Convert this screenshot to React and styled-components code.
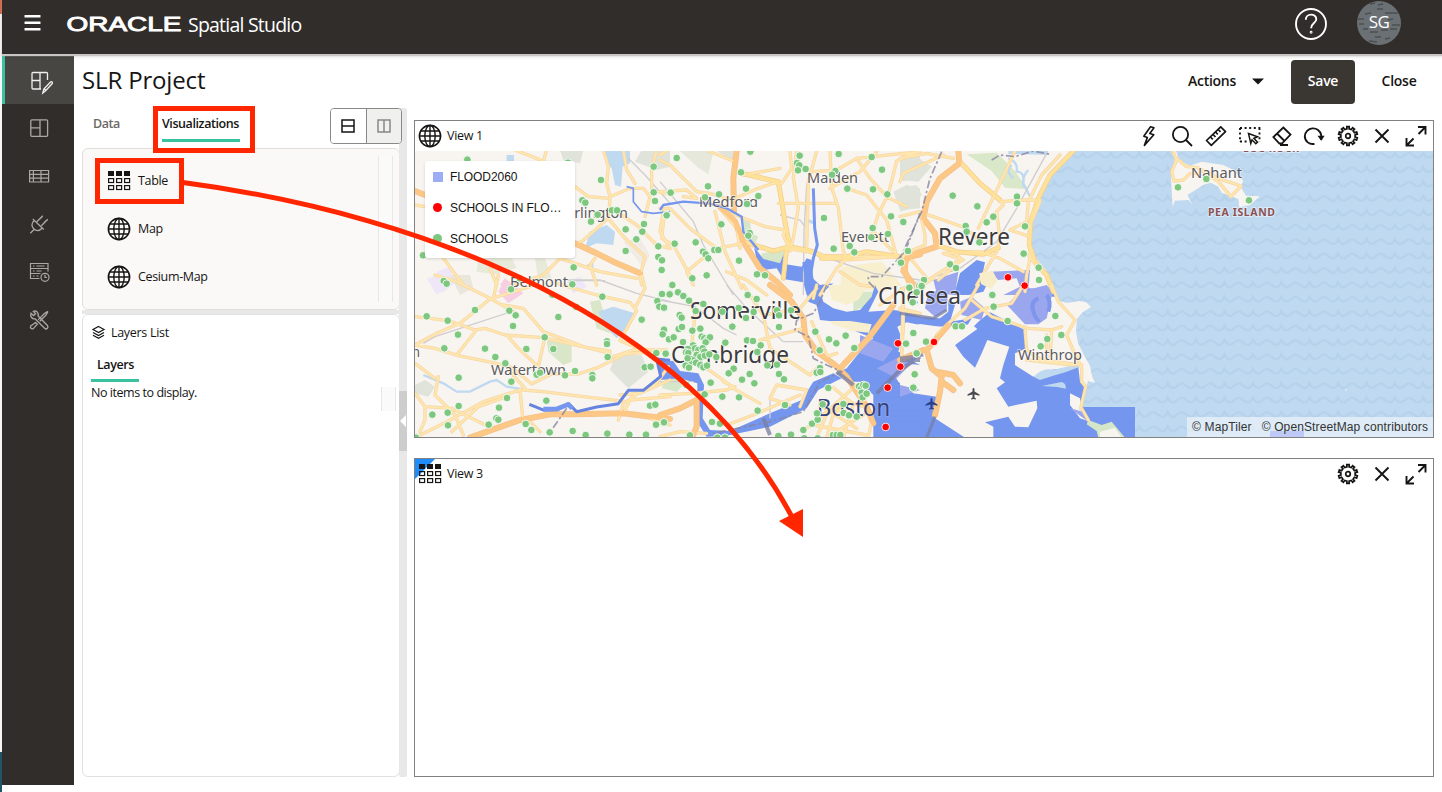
import React from 'react';
import styled, { createGlobalStyle } from 'styled-components';

const Global = createGlobalStyle`
  * { box-sizing: border-box; }
  body { margin: 0; background: #fff; overflow: hidden; }
  #root { font-family: "Open Sans", "Noto Sans", sans-serif; font-stretch: 88%; color: #161513; font-size: 13px; }
`;

/* ---------- shell ---------- */
const Page = styled.div`
  position: relative; width: 1442px; height: 792px; display: flex; overflow: hidden;
`;
const Edge = styled.div`
  width: 2px; flex: none; display: flex; flex-direction: column; background: #f6f6f6;
  &::before { content: ''; height: 14px; background: #d9694f; }
  &::after { content: ''; height: 40px; margin-top: auto; background: #1f5566; }
`;
const Shell = styled.div`flex: 1; display: flex; flex-direction: column;`;
const Header = styled.header`
  height: 54px; background: #312d2a; display: flex; align-items: flex-start; color: #fff;
  box-shadow: 0 2px 1px #c6c5c4, 0 3px 4px rgba(0,0,0,.12); z-index: 1; padding: 0 41px 0 22px;
`;
const MenuIcon = styled.svg`margin-top: 13px;`;
const HelpIcon = styled.svg`margin: 7px 0 0 auto;`;
const Brand = styled.div`display: flex; margin: 12px 0 0 25px; height: 26px;`;
const Product = styled.span`
  font-size: 19.5px; line-height: 25px; margin-left: 5px; letter-spacing: -.78px; white-space: nowrap;
`;
const Avatar = styled.div`
  position: relative; width: 44px; height: 44px; margin: 1px 0 0 29px; border-radius: 50%; overflow: hidden;
  background: #6b7074; font-size: 17px; line-height: 42px; text-align: center; letter-spacing: -.6px;
  svg { position: absolute; inset: 0; }
  span { position: relative; }
`;
const Body = styled.div`flex: 1; display: flex; padding-top: 2px;`;
const Sidebar = styled.nav`width: 72px; height: 729px; background: #312d2a; flex: none;`;
const NavItem = styled.div`
  height: 48px; display: flex; align-items: center; padding: ${p => (p.$active ? '5px 0 0 22px' : '0 0 0 26px')};
  background: ${p => (p.$active ? '#474642' : 'none')};
  border-left: ${p => (p.$active ? '3px solid #3ac2a0' : '0')};
  color: ${p => (p.$active ? '#f1f0ef' : '#aaa8a5')};
`;
const Content = styled.main`flex: 1; display: flex; flex-direction: column; padding: 0 8px 0 8px;`;
const TitleRow = styled.div`display: flex; height: 52px; align-items: flex-start; padding-top: 4px;`;
const Title = styled.h1`
  margin: 0; font-size: 24px; line-height: 39px; font-weight: 400; letter-spacing: -.15px; flex: 1;
`;
const Button = styled.button`
  height: 44px; width: ${p => p.$w}px; border: 0; border-radius: 4px; padding: 0 0 4px; font: inherit; font-size: 14px; font-weight: 600;
  font-stretch: inherit; letter-spacing: -.25px;
  background: ${p => (p.$dark ? '#3a3631' : 'transparent')}; color: ${p => (p.$dark ? '#fff' : '#161513')};
  display: flex; align-items: center; justify-content: center; gap: 16px; margin-left: ${p => p.$ml || 0}px;
  svg { margin-top: 3px; }
`;
const Work = styled.div`display: flex; height: 669px;`;

/* ---------- left panel ---------- */
const Panel = styled.section`width: 317px; display: flex; flex-direction: column;`;
const Tabs = styled.div`display: flex; height: 40px; padding-left: 11px;`;
const Tab = styled.div`
  height: ${p => p.$h || 34}px; line-height: ${p => p.$lh || 32}px; font-size: 12.5px; font-weight: 600; white-space: nowrap; letter-spacing: -.42px;
  color: ${p => (p.$on ? '#161513' : '#6b6966')}; margin-right: ${p => p.$mr || 0}px; width: ${p => p.$w}px;
  border-bottom: 3px solid ${p => (p.$on ? '#3ac2a0' : 'transparent')}; padding-left: ${p => p.$pl || 0}px;
`;
const Toggle = styled.div`
  margin-left: auto; margin-right: -3px; width: 72px; height: 36px; border: 1px solid #8a8887; border-radius: 4px; display: flex; overflow: hidden;
  position: relative;
`;
const ToggleHalf = styled.div`
  flex: 1; display: grid; place-items: center; color: ${p => (p.$off ? '#8a8887' : '#161513')};
  background: ${p => (p.$off ? '#f0f0ef' : '#fff')}; border-left: ${p => (p.$off ? '1px solid #8a8887' : '0')};
`;
const VizBox = styled.div`
  height: 162px; border: 1px solid #e0dfde; border-radius: 6px; background: #faf9f8; display: flex;
  padding: 7px 6px 7px 12px; margin-right: -1px;
`;
const VizList = styled.div`flex: 1; padding-left: 12px;`;
const VizItem = styled.div`
  height: 48px; display: flex; align-items: center; gap: 7px; font-size: 12.5px; letter-spacing: -.35px;
  svg { margin-top: 2px; }
`;
const Gutter = styled.div`width: 15px; border: solid #e8e7e6; border-width: 0 1px; background: #fafafa;`;
const Divider = styled.div`height: 4px; background: #e8e8e8;`;
const LayersBox = styled.div`
  flex: 1; border: 1px solid #e0e0e0; border-radius: 6px; padding: 8px 3px 0 8px; background: #fff; margin-right: -1px;
`;
const LayersHead = styled.div`display: flex; align-items: center; gap: 5px; height: 18px; font-size: 12.5px; letter-spacing: -.3px;`;
const Empty = styled.div`
  display: flex; justify-content: space-between; font-size: 12.5px; line-height: 21px; letter-spacing: -.45px;
  i { width: 15px; height: 24px; margin-top: 5px; border: solid #e8e7e6; border-width: 0 1px; background: #fafafa; }
`;
const Splitter = styled.div`
  width: 8px; background: #e8e8e8; display: flex; align-items: center; border-radius: 2px;
  div { width: 8px; height: 60px; background: #cdcdcd; display: grid; place-items: center; margin-bottom: 43px; }
`;

/* ---------- views ---------- */
const Views = styled.section`flex: 1; margin-left: 7px; padding-top: 12px; display: flex; flex-direction: column; gap: 20px;`;
const View = styled.div`
  position: relative; height: ${p => p.$h || 318}px; border: 1px solid #818181; display: flex; flex-direction: column; background: #fff;
`;
const ViewBar = styled.div`
  position: relative; height: 30px; display: flex; align-items: center; padding: 0 6px 0 3px; font-size: 12.5px; letter-spacing: -.3px; flex: none;
  > span { margin-left: 5px; flex: 1; padding-bottom: 1px; }
`;
const Tools = styled.div`display: flex; gap: 12px; svg { display: block; }`;
const Tighten = styled.div`margin-left: ${p => -p.$by}px;`;
const Corner = styled.div`
  position: absolute; left: 0; top: 0; width: 20px; height: 20px; background: #1e8cfa; clip-path: polygon(0 0, 100% 0, 0 100%);
`;
const MapPane = styled.div`position: relative; flex: 1; overflow: hidden; > svg { display: block; }`;
const Legend = styled.div`
  position: absolute; left: 10px; top: 10px; width: 150px; height: 97px; background: #fff; border-radius: 3px; box-shadow: 0 1px 3px rgba(0,0,0,.15);
  font: 12px "Liberation Sans", Arial, sans-serif; padding: 0 8px;
`;
const LegendRow = styled.div`
  display: flex; align-items: center; height: 31px; gap: 7px; white-space: nowrap; letter-spacing: -.08px;
`;
const Swatch = styled.i`
  width: ${p => (p.$dot ? 9 : 10)}px; height: ${p => (p.$dot ? 9 : 10)}px; border-radius: ${p => (p.$dot ? '50%' : 0)};
  background: ${p => p.$c}; margin-right: ${p => (p.$dot ? 1 : 0)}px;
`;
const Attribution = styled.div`
  position: absolute; right: 0; bottom: 0; height: 20px; padding: 0 5px; display: flex; gap: 10px; background: rgba(255,255,255,.5);
  font: 12px/20px "Liberation Sans", Arial, sans-serif; letter-spacing: .12px; color: #333; white-space: nowrap;
`;

/* ---------- annotations ---------- */
const Callout = styled.div`
  position: absolute; left: ${p => p.$x}px; top: ${p => p.$y}px; width: ${p => p.$w}px; height: ${p => p.$h}px; border: 5px solid #ff2600; z-index: 3;
`;
const ArrowLayer = styled.svg`position: absolute; left: 0; top: 0; z-index: 3; pointer-events: none;`;

/* ---------- icons ---------- */
const Ic = ({ s = 22, vb, w = 1.5, children }) => (
  <svg width={s} height={s} viewBox={vb || `0 0 ${s} ${s}`} fill="none" stroke="currentColor" strokeWidth={w}>{children}</svg>
);
const Globe = () => (
  <Ic s={24} w={1.4}><circle cx="12" cy="12" r="10.6" strokeWidth="1.6" /><ellipse cx="12" cy="12" rx="5.200" ry="10.6" /><path d="M12 1.4v21.2M1.4 12h21.2M3 7h18M3 17h18" /></Ic>
);
const TableIcon = () => (
  <svg width="24" height="22" viewBox="0 0 24 22" fill="none" stroke="#161513" strokeWidth="1.200">
    {[1, 9, 17].map(x => <React.Fragment key={x}>
      <rect x={x} y="1" width="6" height="5" fill="#161513" stroke="none" />
      <rect x={x + .6} y="8.600" width="5" height="3.900" /><rect x={x + .6} y="15.600" width="5" height="3.900" />
    </React.Fragment>)}
  </svg>
);
const NavIcons = [
  <Ic s={26} w={1.3} key="a"><path d="M20.500 10V3.500a1 1 0 0 0-1-1H6a1 1 0 0 0-1 1v14.500a1 1 0 0 0 1 1h8M13 2.500v16.500M5 10.500h8M15.800 23l1-4 6.500-6.800c1.200-1.200 2.900.3 1.800 1.600l-6.500 7-2.800 2.200zM17.200 18.800l1.800 2" /></Ic>,
  <Ic s={22} w={1.3} key="b"><rect x="2.800" y="2.800" width="16.800" height="16.500" rx="1" /><path d="M12 2.800v16.500M2.800 10.800h9.200" /></Ic>,
  <Ic s={22} w={1.2} key="c"><path d="M1.600 5.500h19v11.500h-19zM1.600 9.300h19M1.600 13.200h19M5.400 5.500V17M13 5.500V17" /></Ic>,
  <Ic s={22} w={1.3} key="d"><path d="M2.300 20.300l4.200-4.300M6.300 7.200c-3 3-3 6.300-.6 8.600 2.600 2.500 5.800 2.200 8.700-.8M4.800 6l11 10.500M8.800 8.800l6-6M13.300 12.800l6.500-6.500M11.500 6.300l2.600-2.600M16 9.800l2.600-2.600" /></Ic>,
  <Ic s={24} w={1.2} key="e"><path d="M2.500 3.500h17.500v5H2.500zM2.500 8.500v5h10M20 8.500v3M2.500 13.500v5h9M5 6h1.500M8.500 6h8M5 11h1.500M8.500 11h5M5 16h1.500M8.500 16h2" /><circle cx="17" cy="17.300" r="4" /><path d="M17 14.800v2.700h2" /></Ic>,
  <Ic s={22} w={1.3} key="f"><path d="M19.800 2.300l-3.400 2.300-6.300 6.300M20 2.500l-2 3.500-6.300 6.300M7.500 13.500l1.800 1.800-4 4.300c-1.800 1-3.600-.9-2.600-2.600zM3 4.200l2.600 2.400 2-1.800L5.300 2.300c3-1.100 5.700 1.100 4.700 4.500l9.400 9.700c1.700 2-.9 4.600-2.800 2.800L7 9.800C4.300 10.500 1.800 7.500 3 4.200z" /></Ic>,
];
const Gear = () => {
  const pts = [];
  const step = Math.PI / 5;
  for (let i = 0; i < 10; i++) {
    [[-.24, 7.200], [-.2, 9.500], [.2, 9.500], [.24, 7.200]].forEach(([o, r]) => {
      const a = (i + o) * step;
      pts.push(`${(11 + r * Math.sin(a)).toFixed(2)},${(11 - r * Math.cos(a)).toFixed(2)}`);
    });
  }
  return <Ic w={1.700}><polygon points={pts.join(' ')} /><circle cx="11" cy="11" r="2.300" strokeWidth="1.700" /></Ic>;
};
const CloseIcon = () => <Ic w={1.9}><path d="M4.500 4.500l13 13M17.500 4.500l-13 13" /></Ic>;
const Expand = () => <Ic w={1.9}><path d="M13 2h7.500v7.500M20.500 2l-7 7M9 20.500H1.500V13M1.500 20.500l7-7" /></Ic>;
const MapTools = () => (
  <Tools>
    <Ic w={1.600}><path d="M12.500 1.800L5.800 11.200l3.600 1.200-3 8 9.400-10.600-4-1.400 4.200-5.600z" strokeLinejoin="round" /></Ic>
    <Tighten $by={1}><Ic w={1.800}><circle cx="9.500" cy="9.500" r="7.600" /><path d="M15 15l6 6" /></Ic></Tighten>
    <Ic w={1.700}><path d="M1.500 15.500L15.700 1.800l4.800 4.800L6.300 20.300z" strokeLinejoin="round" /><path d="M5.500 12l2.300 2.300M8 9.500l2.500 2.500M10.500 7l2.300 2.300M13.200 4.500l2.300 2.300" /></Ic>
    <Ic w={1.900}><path d="M1 3h20.500M1 3v14M1 16.500h8M20.500 3v14" strokeDasharray="2 2.600" /><path d="M9.500 8.500l9 3.200-3.600 1.500 3.600 4-1.700 1.600-3.800-4-1.200 3.600z" strokeWidth="1.500" /></Ic>
    <Tighten $by={2}><Ic w={1.800}><path d="M12.300 2.500l7.200 7-8.600 9-2.500 0-6-6.500zM6 8.500l7 7M9 20h8" /></Ic></Tighten>
    <Tighten $by={2}><Ic w={1.900}><path d="M11.500 18.800c-5 1.200-9.700-2.500-9.700-7.500a8.300 8.300 0 0 1 16.400-1.400v5" /><path d="M14.500 10.800l3.700 5 3.500-5z" fill="currentColor" stroke="none" /></Ic></Tighten>
    <Gear /><CloseIcon /><Expand />
  </Tools>
);

/* ---------- map data; each tile's drawing uses a 3x local grid ---------- */
const ORIGIN = { nw: [410, 115], n: [660, 145], ne: [900, 145], sw: [410, 275], s: [660, 285], se: [900, 285], e: [1160, 145] };
const Tile = ({ t, children }) => <g transform={`translate(${ORIGIN[t].join(' ')}) scale(.33333)`}>{children}</g>;

const AREAS = {
  nw: [
    ['#bfd9f1', 'M585 105h75v40l-22 10-5 60-18-5-10-50-20-20zM525 400l15-50 50-20 25 20-5 40-50-5zM290 120h22v20h-22zM530 450l20-10v25h-15z'],
    ['#dfe3da', 'M675 140l20-35h85v50l-40 10zM450 105h70l-10 40-50-10z'], ['#e7ead9', 'M205 430l100-2 15 30-60 20-60-8zM375 430l30 0 20 60-40 5z'],
    ['#efe6f8', 'M80 470l40-15 15 50-40 30z'], ['#f7cfe2', 'M270 510l15-20 20 20z'], ['#f1ebe6', 'M640 380l50-10 30 50-20 40z'],
  ],
  n: [
    ['#e6e8db', 'M60 18h100l-15 70-30-20z'], ['#dfe3da', 'M170 18h50v30zM700 140l40-20 40 10v60l-60 5zM720 60l60-30v50l-50 30z'],
    ['#d6e6c8', 'M250 225l20 5 5 35 20 10-15 30-25-30zM305 325l60-10 20 15-20 30-60-15z'], ['#f8efcf', 'M545 365l120-15 60 70-50 20-60-5-75 15z'],
    ['#bfd9f1', 'M440 220l20 8 10-10-10 20-20-6z'],
  ],
  ne: [
    ['#dfe3da', 'M0 40l50-5 45 30-40 45-55-5zM0 130l50-10 15 30-30 40-35 10z'],
    ['#d9e8c8', 'M200 28l90-5 50 50 45 60-70-5-40-50z'],
    ['#bfd9f1', 'M325 18h60l60 0-5 12-60-2-55 0z'],
  ],
  sw: [
    ['#f7cfe2', 'M265 50l20-40 55 45-45 30z'], ['#efe6f8', 'M50 10l45-10 25 30-40 30zM470 20l40-15 20 30-40 20z'],
    ['#d9e6c8', 'M540 80l30-5 30 100-40-15zM410 195l75 15v50l-25 10-45-40z'], ['#bfd9f1', 'M565 110l45-15 65 20-20 40-35 35-30-30z'],
    ['#dfe3da', 'M600 285l15-45h80l20 50-60 50zM15 330l30-15 30 20-20 30-40-10z'], ['#eae6dc', 'M120 0h60l10 40-40 20z'],
  ],
  s: [
    ['#d6e6c8', 'M5 310l25-60 60 30-40 40zM580 20l60 0 0 30-60 30z'],
  ],
};
const COAST = 'M1073 151L1063 160L1053 173L1045 186L1040 199L1034 217L1031 235L1031 246L1035 257L1046 270L1053 288L1057 300L1067 303L1079 301L1086 302L1091 307L1083 312L1077 319L1076 331L1078 343L1084 355L1090 366L1092 376L1095 383L1088 381L1085 392L1081 405L1088 420L1124 438H1433V151Z';
const NAHANT = 'M38 18L45 40 33 100 38 185 45 167 85 165 97 178 82 150 130 120 152 113 175 125 185 143 235 162 238 187 270 180 300 154 258 152 242 125 250 108 220 75 190 60 125 50 90 62 58 45 48 18z';
const FLOOD = {
  n: ['M282 305L310 342 360 355 370 330 378 358 425 365 440 340 455 345 458 400 480 420 520 415 480 450 440 450 430 412 370 402 350 370 310 375 290 345z'],
  s: [
    'M437 0H475L490 50 520 70 560 80 600 75 635 35 645 0 655 20 625 80 700 75 780 85V458H640V330L600 290 570 290 530 265 560 250 600 200 640 160 590 140 530 110 480 105 470 60 445 50z',
    'M0 225L40 228 60 258 115 265 132 300 128 400 150 435 210 438 330 385 425 345 460 290 520 265 545 280 475 315 440 370 330 425 200 452 140 455 112 410 112 295 60 280 0 285z',
    'M590 250l40 15 5 30-20-15z',
  ],
  se: [
    'M0 83L40 95 120 100 145 80 145 45 165 60 150 110 215 100 200 125 0 125z',
    'M165 180L235 110 270 82 375 135 378 190 345 205 345 240 400 275 450 255 535 245 540 290 555 305 548 366H705V458H0V125z',
  ],
  ne: ['M165 440L180 385 230 345 255 352 245 400 280 380 250 440 205 450 150 450zM385 430l75 5 5 20-110 0z'],
};
const LIGHT = {
  ne: ['M100 405l75-25-10 70-55-5zM270 380l120-5-5 65-20 10-55 0 50-25-10-25-55 5z'],
  se: ['M320 60L360 20 440 0 458 20 440 100 415 118 375 118 330 70zM180 50l35-15 40 35-10 35-60-15zM85 20l60-5-5 60-35 20-30-25zM510 370l40 10 15 30zM0 300l60 15-60 20z'],
  s: ['M600 150l100 40-30 40-70-25zM650 250l80-40 40 10-60 60z'],
};
const ISLANDS = {
  se: [
    'M0 135L60 117 120 125 215 118 232 132 165 180 190 215 225 248 245 205 262 165 328 185 310 240 300 280 315 292 290 310 325 365 410 347 412 370 385 427 345 425 325 395 255 412 280 425 280 458H195L105 400 110 335 40 325 0 310V250L60 240 0 210z',
    'M510 325l30 15 10 50 20 20-30-10-30-40z',
  ],
  s: ['M712 125L740 112 780 120V205L745 210 715 200 725 160zM700 265L730 235 780 240V310L745 315 715 290z'],
  ne: ['M300 405l25-15 40 5-10 35-40 20-20-5z'],
};
/* [tile, class, path] : m = motorway, y = trunk, r = local */
const ROADS = [
  ['nw', 'm', 'M15 228L45 240M495 385L560 415 610 440 690 475'],
  ['nw', 'r', 'M315 105L380 130 400 140M400 140l10-35M580 105l15 50-5 50 10 40 60-25 40 0 20 25-15 60M495 215l40 30 65 5M600 250l-5 60-80 70-20 5M595 310l50 60 60 55-15 60 5 25M620 290l60 40 60 60 40 10M740 105l-15 60 0 60 55 15M100 430l60 80M15 270l30 5M240 460l20 50M640 105l10 60 25 40M450 430l-50 50-60 20-40 15M450 430l120 40 110 20M560 510l-20-60 15-20M760 290l-10 60 30 50'],
  ['n', 'r', 'M0 45L30 60 80 110 110 140 150 145 215 165M0 140L80 135 110 160 70 155M0 30L20 18M145 18l75 30M245 85l50 15 70 15 30-45-5-52M350 110l15 50 15 90-10 20 20 45M410 18l-10 80 15 90-15 90-10 40M355 175h170M510 18l5 110 20 60 15 130 10 20M460 80l70-5 60-35 190-20M510 130l90-50 50-60M590 40l40 60 50 55 60 30M780 18l-70 30-25 100-30 60-20 60M560 130l60 20 60 75 30 110M215 205l100 40 60 10M250 90l110-20M225 160l70-30 60-20M180 190l50 60 10 60M165 200l15 60 15 60 50 110M0 190l30 0 60 60 80 60 80-15M15 190l-10 90 35 20 60 110M200 380l60 25 60 45M100 420l-20-40 60-50M380 310l60 10 60 15 230 0 50-15M485 330l70 15 160-10M440 310l5-200 25-92M480 450l50-80 40-40M540 380l60 40 40 5M640 260l70 70'],
  ['n', 'y', 'M250 290L340 318 390 305 460 320 490 335 560 335 620 320 720 335M380 310l-10 90M245 85l110 25 20 120 15 80M485 340l90 0'],
  ['n', 'm', 'M230 18L220 100 222 200M180 185L225 230 250 290 300 370 350 410 390 450M780 328l-40 10-10 40 30 40'],
  ['ne', 'm', 'M175 18L178 55 120 100 80 170 70 220 105 265 110 305 50 325 15 345 15 380 40 440'],
  ['ne', 'r', 'M0 40L80 25 160 40M0 110L10 85 130 30M45 35l-45-10M180 55l60 60 60 50 10 15-20 20M345 18L295 125 235 250M70 205l60 20 70 25 40 40M0 215l60-15 15 70 0 30-60 25-10 30M190 345l-60-20 110-5 60 20 70 40M290 200l10 80-10 40-60 100M300 170l80-5 40 0M480 30L425 90 385 170 380 230 330 255M330 255l60 20M420 170L395 230 385 290 392 330 380 390 375 440M385 330l30 40M165 320l20 25-70 60M35 345l50 60 85-55M40 440l60-40'],
  ['ne', 'y', 'M520 18L450 90 415 160 392 230 388 300 405 350 440 390 460 440M180 50l60 65 60 50M110 300l60 20 80 8 45-20'],
  ['sw', 'm', 'M180 488L330 435 420 418 500 418 640 415 780 432'],
  ['sw', 'r', 'M15 210L80 175 150 145 240 72 375 30M75 0l65 20 100 50 80 45M15 125l100 12 80 28 30-5 60 20 115 8 130 30 70 10M195 170l-55 70M15 210l60 10 70 22 100 20M250 70l15-70M280 90l60 10 60 70 120 45 80 20M290 180l35 40 60 55 18-80M245 262l60 15 60 50 60-30 80 0 60-20 80-40 55-5M300 290l45 50M340 345l60 5 120 15 130 15 40-30 50-25 35-50M85 305l-10 55 60 60 25 60M15 355l30 40 0 40-15 35M75 310l-60-45M45 395l80 5 120 60M125 470L205 395 290 365M15 488l90-45 120-65 110-35M330 345l10 100M360 440l30 30M640 385l-15 50M440 25l120 35 100 22 20 25-50 90 60 25 50 5M780 315l-90 40-60 5M675 100l30-60-10-40M610 245l60-20 100 0M640 415l20-40 120-10M690 420l90 30'],
  ['s', 'm', 'M330 0L395 50 430 100 435 150 470 200 525 240 560 275M700 60L625 160 540 250M0 390l60-20 50-25 0 80-10 25M560 275l60 90 20 50'],
  ['s', 'r', 'M0 330L100 325 200 315 225 305M210 305l90 50M190 290l30 15M105 90l-10 90M250 0l60 90 20 100 60 40 60 40 20-20M300 165l130-35M310 90l110-20 50-60M455 110l50 110 20 20M500 215l30-10M330 340l20-40 90 15-20 50M330 340l60 20M200 420l80-30 140-60M140 250l70 50M460 40l10-40M440 430l60-50 90-80M470 458l30-70 60-40 60 20 15 40-10 50M500 458l20-70 50-40M530 440l80-50M460 420l160 30M550 458l30-100-60-50M480 360l110 70M730 60l0 70-5 80M660 60l70-50M720 70l60 15M0 455l60-15 80 5'],
  ['se', 'm', 'M145 120L80 195 95 250 125 275 120 320 105 390M0 225l70-30M110 260l50 10 20 25M125 290l35 25'],
  ['se', 'r', 'M0 75l60 15M235 0L195 70 140 120 110 150M195 105l60-35 80-15 35-55M215 45l60 50 110 35 70 5 30-10M455 0L475 50 525 105 500 150 530 220M375 135l5 60 45 30 120 15M455 135l-5 90M380 225l140 15M530 215l15 35 0 40 12 15-15 65M10 10l-5 200M440 200l0-50M545 370l20 35'],
  ['e', 'r', 'M38 18L50 45 35 80 42 108 70 105 90 85 115 85M50 40l30 25 35 3M115 70l60 40 38 45 30-32-60-20-68-33'],
];
const RAIL = {
  nw: ['M655 130l50 50 75 85M475 497l110 0'], n: ['M0 110L100 230 130 300 220 450M470 18L440 120 432 260 430 450M360 210l60 15 15 20M520 345l120 40 140 20'],
  sw: ['M40 205L75 185 310 108M470 15h100l110 40 100 25'], s: ['M0 45L105 65 190 130 230 150M200 0l60 70 110 100M0 290h100M330 340v60M370 170l60 0'],
  ne: ['M440 25L350 190 290 290 180 370 0 430'],
};
const BOUNDARY = { ne: ['M125 20L90 100 65 200 0 340', 'M275 45L300 30 345 35 400 18 450 28'], n: ['M780 205L735 320 665 395 625 395 625 410 645 430'], s: ['M500 0L480 50 460 85 410 105 405 135 445 155 460 220 500 240 545 260 480 290 430 380 330 410 160 445'], sw: ['M470 400l-45 65'] };
const DOTS = {
  nw: '172,134 474,143 731,155 573,195 731,232 735,258 779,232 769,300 517,256 526,263 563,299 543,320 606,286 621,286 647,343 702,327 697,350 679,373 647,408 745,394 745,426 757,435 755,465 491,457 39,421 101,498 110,506 487,508 329,490',
  n: '50,39 271,20 243,82 144,124 177,148 258,131 295,153 261,177 135,157 32,143 20,211 184,238 269,264 265,272 44,296 107,292 129,320 137,328 145,340 163,315 175,315 237,347 291,388 315,391 6,346 5,375 97,400 140,391 36,419 54,441 5,446 30,446 72,453 263,449 419,32 411,54 418,61 414,76 437,72 536,27 526,78 516,89 635,36 666,74 562,131 639,133 682,148 492,219 638,249 634,277 684,267 693,214 729,230 521,311 569,303 583,322 742,317 721,353 747,427 778,423',
  ne: '158,152 351,155 351,175 232,184 280,215 260,232 197,243 200,260 238,292 375,244 10,231 371,326 416,368 417,405 24,318 150,358 168,369 72,405 64,422 28,427 50,442 3,353 277,449',
  sw: '303,43 577,65 427,59 499,96 50,124 113,137 195,105 298,107 317,121 309,153 445,126 144,179 103,220 225,221 256,246 286,265 349,222 404,187 430,222 465,301 495,288 380,299 390,293 547,300 547,310 591,199 591,207 593,246 695,134 754,57 777,58 742,78 748,95 763,99 761,166 757,178 777,194 739,234 767,237 704,277 722,275 146,308 304,320 291,369 267,398 409,377 67,419 113,413 146,393 114,451 236,449 259,430 265,434 347,447 364,465 419,472 488,468 527,480 592,476 658,479 708,479 720,392 736,389 738,449 761,443 18,488',
  s: '37,0 6,27 29,28 54,22 70,33 87,47 12,68 130,57 107,78 187,80 236,69 263,30 290,42 281,81 258,99 393,76 351,76 357,91 357,126 217,125 59,90 65,98 12,134 8,148 56,132 66,126 97,137 121,131 27,163 41,157 69,171 125,155 133,160 142,165 150,157 137,172 99,181 84,192 78,202 85,204 105,190 115,195 128,190 133,200 110,210 121,216 135,212 148,208 169,216 17,206 100,226 90,235 83,220 108,233 121,240 130,247 141,242 77,242 87,248 196,173 261,166 279,168 302,181 292,201 322,241 351,239 221,251 206,265 269,267 246,284 283,295 152,293 357,267 372,283 134,328 79,300 187,335 237,337 293,377 375,360 12,412 90,451 156,411 180,416 172,458 195,458 355,453 393,449 430,435 456,416 473,404 471,385 488,358 505,309 480,249 470,263 481,261 466,140 479,196 507,163 529,175 557,152 583,189 433,460 473,460 519,450 530,450 541,450 550,357 551,384 567,391 590,395 597,304 604,310 610,300 617,302 605,323 608,337 620,326 737,176 760,144 769,205 765,268 760,307 758,52 747,7',
  se: '277,30 281,65 323,108 466,93 484,150 442,162 422,184 167,124 186,124 40,144 18,176 78,170 50,205 44,268 40,308 28,8 65,3 50,22 38,52',
  e: '139,102 54,127 267,166',
};
const REDS = { ne: '324,397 374,422', s: '714,175 721,245 683,308 677,426', se: '102,171' };
const LABELS = [
  ['Malden', 807, 183, 51, 15], ['Medford', 699, 207, 59, 15], ['Everett', 841, 242, 48, 15], ['Arlington', 565, 218, 63, 15],
  ['Belmont', 510, 287, 58, 15], ['Watertown', 491, 375, 75, 15], ['Winthrop', 1018, 360, 64, 15], ['Nahant', 1191, 178, 51, 15], ['n', 412, 357, 8, 15],
  ['Somerville', 690, 319, 111, 23], ['Cambridge', 671, 363, 118, 23], ['Chelsea', 878, 304, 83, 23], ['Revere', 938, 245, 72, 23], ['Boston', 817, 416, 73, 23],
];
const STYLE = { r: ['#f7d7a4', 10, '#ffe6ae', 5.5], y: ['#f4cd8c', 15, '#ffe29a', 10.5], m: ['#f4c08a', 18, '#fdc885', 13.5] };
const each = o => Object.entries(o);
const shapes = (data, props) => each(data).map(([t, ds]) => <Tile t={t} key={t}>{ds.map((d, i) => <path d={d} key={i} {...props} />)}</Tile>);
const dots = (data, fill) => each(data).map(([t, s]) => (
  <Tile t={t} key={t}>{s.split(' ').map((p, i) => { const [x, y] = p.split(','); return <circle key={i} cx={x} cy={y} r="11.500" fill={fill} stroke="#fff" strokeWidth="3" strokeOpacity=".85" />; })}</Tile>
));
const roadPass = (kinds, inner) => ROADS.filter(r => kinds.includes(r[1])).map(([t, k, d], i) => (
  <Tile t={t} key={i}><path d={d} fill="none" strokeLinejoin="round" strokeLinecap="round" stroke={STYLE[k][inner ? 2 : 0]} strokeWidth={STYLE[k][inner ? 3 : 1]} /></Tile>
));
const Plane = ({ x, y, c }) => <path transform={`translate(${x} ${y})`} d="M0-5.500c1 0 1 1 1 3.500l5 3v1.300l-5-1.300v3l1.500 1.200v.8L0 5.500l-2.500.5v-.8L-1 4V1l-5 1.300V1l5-3c0-2.500 0-3.500 1-3.500z" fill={c} />;

const StreetMap = () => (
  <svg width="1018" height="287" viewBox="415 151 1018 287">
    <defs>
      <pattern id="waves" width="28.400" height="14.400" patternUnits="userSpaceOnUse" x="415" y="148">
        <path d="M0 5c4 0 5 4.500 9 4.500S13.500 6 14.200 4.500C16 8 17 9.500 20 9.500s5-4.500 8.400-4.500" fill="none" stroke="#9fc0dc" strokeWidth="2.200" opacity=".3" />
      </pattern>
    </defs>
    <rect x="415" y="151" width="1018" height="287" fill="#f8f4f0" />
    {each(AREAS).map(([t, a]) => <Tile t={t} key={t}>{a.map(([c, d], i) => <path key={i} d={d} fill={c} />)}</Tile>)}
    <path d={COAST} fill="#bfd9f1" /><path d={COAST} fill="url(#waves)" />
    <Tile t="ne"><path d="M325 40q30 10 25 40 25 0 20 35l20 40M335 60q-20 20 5 40M385 75q-20 20-15 50" fill="none" stroke="#bfd9f1" strokeWidth="7" /></Tile>
    <Tile t="sw"><path d="M40 300l60 25 40 25 40 0 60-30 20-5 30 20 60 10" fill="none" stroke="#bfd9f1" strokeWidth="7" /></Tile>
    <Tile t="e"><path d={NAHANT} fill="#f8f4f0" /></Tile>
    {shapes(FLOOD, { fill: '#7596ee' })}
    <Tile t="s"><path d="M650 458V300L780 90V458z" fill="url(#waves)" opacity=".25" /><path d="M505 0h120l-30 45-35 15-45-15zM510 108l60 0 65 10-8 25-50-5-60-20z" fill="#f8efcf" /></Tile>
    {shapes(ISLANDS, { fill: '#f8f4f0' })}
    {shapes(LIGHT, { fill: '#9aa6ee' })}
    <Tile t="se">
      <path d="M415 40q-25 10-15 40t20 25M440 30q15 20 5 50" fill="none" stroke="#7f95ec" strokeWidth="12" />
      <path d="M400 275q30-30 60-20l60-15 20 5-40 15-50 15-30 10zM425 303l60-12q15 5 12 20l-25-5z" fill="#bfd9f1" />
      <path d="M565 405l40 15 30-10 40 48H595l-5-20-30-20z" fill="#d6e6c8" /><path d="M600 440l45-12 20 30h-65z" fill="#f8f4f0" />
    </Tile>
    {shapes(RAIL, { fill: 'none', stroke: '#cfcdce', strokeWidth: 4 })}
    {roadPass('ry', false)}{roadPass('m', false)}{roadPass('ry', true)}{roadPass('m', true)}
    <g fill="none" stroke="#7596ee" strokeLinejoin="round">
      <Tile t="sw"><path d="M358 388l45 18 40-2 32-18 25 24 60-14 65-10 30-40h45l52-42-12-52 40 4" strokeWidth="9" stroke="#6684df" /><path d="M400 402l40 0 35-14 12 12" strokeWidth="14" /></Tile>
      <Tile t="n"><path d="M0 195l10-15 60-10 80 6 50 14 45 25 5 45 45 55" strokeWidth="7" /><path d="M460 130l4 120 8 50-12 40-15 90" strokeWidth="9" /><path d="M440 350l10 70" strokeWidth="26" /></Tile>
      <Tile t="nw"><path d="M650 215l20 5 0 40 25 30 35 5 50-5" strokeWidth="5" /></Tile>
    </g>
    <g fill="none" stroke="#767da5" strokeWidth="12" opacity=".75">
      <Tile t="s"><path d="M780 215l-60 40-70 70M530 260l50 40M780 225h-60M310 400l20 50" /></Tile>
      <Tile t="se"><path d="M0 220l70-10M105 395L80 458M0 85l100 15 40-25" strokeWidth="9" /></Tile>
    </g>
    {shapes(BOUNDARY, { fill: 'none', stroke: '#8784a0', strokeWidth: 5, strokeDasharray: '24 8 7 8', opacity: .8 })}
    <Tile t="ne"><path d="M238 385l40-8 15 30-20 25-30-15z" fill="#f8edcb" /></Tile>
    <g fontFamily='"Noto Sans", sans-serif' fill="#4a4a4e" stroke="#fff" strokeWidth="2" strokeOpacity=".5" paintOrder="stroke" strokeLinejoin="round">
      {LABELS.map(([s, x, y, w, f]) => (
        <text key={s} x={x} y={y} fontSize={f} textLength={w} lengthAdjust="spacingAndGlyphs" fill={s === 'Boston' ? '#38437a' : f > 20 ? '#3b3b40' : '#5b5b60'} strokeOpacity={s === 'Boston' ? .15 : .5}>{s}</text>
      ))}
      <g fill="#8a5254" fontWeight="700" fontSize="10.500">
        <text x="1208" y="215.500" textLength="67">PEA ISLAND</text><text x="1243" y="151.800" textLength="56">EGG ROCK</text>
      </g>
    </g>
    <Plane x={973.500} y={393.500} c="#4a4a4e" /><Plane x={931.500} y={403.500} c="#2c3f86" />
    {dots(DOTS, '#7dc77f')}
    {dots(REDS, '#ff0000')}
    <rect x="1270" y="431" width="34" height="7" fill="#7f92f0" />
    <path d="M1346 387.500l.8 3h-1.400z" fill="#f8f4f0" />
  </svg>
);

export default function App() {
  return (
    <Page>
      <Global />
      <Edge />
      <Shell>
        <Header>
          <MenuIcon width="17" height="20" fill="#fff"><rect x=".5" y="2" width="16" height="2.600" rx=".5" /><rect x=".5" y="8.500" width="16" height="2.600" rx=".5" /><rect x=".5" y="15" width="16" height="2.600" rx=".5" /></MenuIcon>
          <Brand>
            <svg width="117" height="24"><text x=".5" y="18.500" fill="#fff" stroke="#fff" strokeWidth=".9" fontFamily='"Liberation Sans", sans-serif' fontSize="20.500" textLength="115" lengthAdjust="spacingAndGlyphs">ORACLE</text></svg>
            <Product>Spatial Studio</Product>
          </Brand>
          <HelpIcon width="34" height="34" viewBox="0 0 34 34" fill="none" stroke="#fff" strokeWidth="1.900">
            <circle cx="17" cy="17" r="15" /><path d="M11.800 12.800c0-7 10.500-6.500 10.500-.6 0 3.800-5.200 4-5.200 9" /><circle cx="17.100" cy="25.300" r=".5" />
          </HelpIcon>
          <Avatar>
            <svg width="44" height="44" stroke="#4b4f52" strokeWidth="1.400"><path d="M13 3l5-1M21 4l5-1M20 8h6M8 13l6-1M28 12h13M1 18h6M31 19l5-1M35 24h8M6 28h5M13 31l8 0M24 29h7M33 28h7M18 36h6M12 40l8 1M28 38l5-1M2 23h5" /></svg>
            <span>SG</span>
          </Avatar>
        </Header>
        <Body>
          <Sidebar>{NavIcons.map((ic, i) => <NavItem key={i} $active={i === 0}>{ic}</NavItem>)}</Sidebar>
          <Content>
            <TitleRow>
              <Title>SLR Project</Title>
              <Button $w={78}>Actions <svg width="12" height="7"><path d="M0 .5h12L6 6.500z" fill="#161513" /></svg></Button>
              <Button $w={64} $dark $ml={26}>Save</Button>
              <Button $w={70} $ml={9}>Close</Button>
            </TitleRow>
            <Work>
              <Panel>
                <Tabs>
                  <Tab $w={26} $mr={43}>Data</Tab>
                  <Tab $w={78} $on>Visualizations</Tab>
                  <Toggle>
                    <ToggleHalf><Ic s={14}><path d="M1 1h12v12H1zM1 7h12" /></Ic></ToggleHalf>
                    <ToggleHalf $off><Ic s={14}><path d="M1 1h12v12H1zM7 1v12" /></Ic></ToggleHalf>
                  </Toggle>
                </Tabs>
                <VizBox>
                  <VizList>
                    <VizItem><TableIcon />Table</VizItem>
                    <VizItem><Globe />Map</VizItem>
                    <VizItem><Globe />Cesium-Map</VizItem>
                  </VizList>
                  <Gutter />
                </VizBox>
                <Divider />
                <LayersBox>
                  <LayersHead>
                    <Ic s={15} w={1.200}><path d="M7.500 1.500l5.500 3-5.500 3-5.500-3zM2 7.500l5.500 3 5.500-3M2 10.300l5.500 3 5.500-3" /></Ic>Layers List
                  </LayersHead>
                  <Tab $on $h={41} $lh={48} $w={48} $pl={6}>Layers</Tab>
                  <Empty>No items to display.<i /></Empty>
                </LayersBox>
              </Panel>
              <Splitter><div><svg width="6" height="12"><path d="M6 0v12L0 6z" fill="#fff" /></svg></div></Splitter>
              <Views>
                <View>
                  <ViewBar><Globe /><span>View 1</span><MapTools /></ViewBar>
                  <MapPane>
                    <StreetMap />
                    <Legend>
                      <LegendRow><Swatch $c="#9dadf5" />FLOOD2060</LegendRow>
                      <LegendRow><Swatch $c="#ff0000" $dot />SCHOOLS IN FLO…</LegendRow>
                      <LegendRow><Swatch $c="#7dc77f" $dot />SCHOOLS</LegendRow>
                    </Legend>
                    <Attribution><span>© MapTiler</span><span>© OpenStreetMap contributors</span></Attribution>
                  </MapPane>
                </View>
                <View $h={319}>
                  <Corner />
                  <ViewBar><TableIcon /><span>View 3</span><Tools><Gear /><CloseIcon /><Expand /></Tools></ViewBar>
                </View>
              </Views>
            </Work>
          </Content>
        </Body>
      </Shell>
      <Callout $x={153} $y={106} $w={102} $h={47} />
      <Callout $x={95} $y={158} $w={89} $h={46} />
      <ArrowLayer width="1442" height="792">
        <path d="M183 182.500C430 215 690 320 793 519" fill="none" stroke="#ff2600" strokeWidth="5" />
        <path d="M803 537l-24-16 24-12z" fill="#ff2600" />
      </ArrowLayer>
    </Page>
  );
}
